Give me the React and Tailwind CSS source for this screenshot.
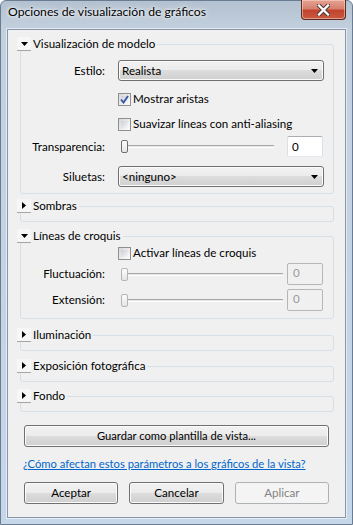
import React from "react";

function TriOpen() {
  return (
    <svg width="7" height="4" viewBox="0 0 7 4">
      <path d="M0 0H7L3.5 4Z" fill="#000" />
    </svg>
  );
}
function TriClosed() {
  return (
    <svg width="4" height="7" viewBox="0 0 4 7">
      <path d="M0 0V7L4 3.5Z" fill="#000" />
    </svg>
  );
}

function Group({ label, open, className, children }) {
  return (
    <div className={"border border-[#d5dfe5] rounded-[3px] " + className}>
      <div className="-mt-[8px] -ml-[4px] flex h-[14px] items-center">
        <div className="w-[14px] h-[14px] bg-[#f6f6f6] border-b border-[#a5a5a5] flex items-center justify-center">
          {open ? <TriOpen /> : <TriClosed />}
        </div>
        <span className="bg-[#f0f0f0] pl-[2px] pr-[2px] leading-[14px]">{label}</span>
      </div>
      {children}
    </div>
  );
}

function Select({ text }) {
  return (
    <div className="w-[206px] h-[21px] rounded-[3px] border border-[#707070] bg-[linear-gradient(#f2f2f2_0%,#ebebeb_50%,#dddddd_50%,#cfcfcf_100%)] shadow-[inset_0_0_0_1px_#fbfbfb] flex items-center justify-between pl-[3px] pr-[5px]">
      <span className="leading-[14px]">{text}</span>
      <svg width="7" height="4" viewBox="0 0 7 4">
        <path d="M0 0H7L3.5 4Z" fill="#000" />
      </svg>
    </div>
  );
}

function Check({ checked, label }) {
  return (
    <div className="flex items-center">
      <div className="w-[13px] h-[13px] border border-[#8e8f8f] bg-[linear-gradient(135deg,#d8d8d8,#fdfdfd)] p-[2px] flex items-center justify-center">
        <div className="w-full h-full bg-[linear-gradient(135deg,#cbcfd5,#f6f6f6)] flex items-center justify-center">
          {checked && (
            <svg width="9" height="9" viewBox="0 0 9 9" className="-m-[1px]">
              <path d="M1 4.5L3.5 7.5L8 1" fill="none" stroke="#3a57a6" strokeWidth="1.9" />
            </svg>
          )}
        </div>
      </div>
      <span className="ml-[2px] leading-[14px]">{label}</span>
    </div>
  );
}

function Slider({ trackW, disabled }) {
  return (
    <div className="relative w-[169px] h-[13px] flex items-center">
      <div
        className={
          "ml-[3px] h-[3px] border-t border-[#a8a8a8] border-b border-b-white bg-[#e6e6e6] " +
          trackW
        }
      />
      <div
        className={
          "absolute left-[3px] top-0 w-[7px] h-[13px] rounded-[2px] border bg-[linear-gradient(#fdfdfd,#e4e4e4)] " +
          (disabled ? "border-[#b5b5b5]" : "border-[#707070]")
        }
      />
    </div>
  );
}

function TextBox({ value, disabled, className }) {
  return disabled ? (
    <div className={"w-[36px] border border-[#b6b6b6] rounded-[2px] bg-[#f0f0f0] text-[#9a9a9a] pl-[5px] pt-[2px] leading-[14px] " + className}>
      {value}
    </div>
  ) : (
    <div className={"w-[36px] border border-[#abadb3] border-b-[#e3e9ef] border-x-[#dbdfe6] rounded-[2px] bg-white pl-[4px] flex items-center leading-[14px] " + className}>
      {value}
    </div>
  );
}

function Button({ children, disabled, className }) {
  return disabled ? (
    <div className={"rounded-[3px] border border-[#adb2b5] bg-[#f4f4f4] text-[#838383] flex items-center justify-center " + className}>
      {children}
    </div>
  ) : (
    <div className={"rounded-[3px] border border-[#707070] bg-[linear-gradient(#f2f2f2_0%,#ebebeb_50%,#dddddd_50%,#cfcfcf_100%)] shadow-[inset_0_0_0_1px_#fbfbfb] flex items-center justify-center " + className}>
      {children}
    </div>
  );
}

function Label({ children }) {
  return <div className="w-[84px] text-right leading-[14px]">{children}</div>;
}

export default function App() {
  return (
    <div className="w-[353px] h-[525px] border border-[#6a7c91] rounded-t-[6px] bg-[linear-gradient(180deg,#b3c1d0_0px,#c3d0de_29px,#c6d7ea_100%)] flex flex-col px-[6px] pb-[6px] font-['Lato',sans-serif] text-[11.6px] text-black">
      <div className="h-[28px] flex justify-between items-start">
        <div className="pl-[1px] pt-[3px] leading-[16px] text-[12.2px] [text-shadow:0_0_6px_#ffffff,0_0_3px_#ffffff]">
          Opciones de visualización de gráficos
        </div>
        <div className="-mt-[1px] w-[45px] h-[20px] rounded-b-[4px] border border-t-0 border-[#5a2c26] bg-[linear-gradient(#e6a394_0%,#d6806e_45%,#c2432e_55%,#c95a3f_100%)] shadow-[inset_0_0_0_1px_rgba(255,220,210,0.5)] flex items-center justify-center">
          <svg width="13" height="12" viewBox="0 0 13 12">
            <path d="M2 1.5L11 10.5M11 1.5L2 10.5" stroke="#4a3030" strokeWidth="4.2" strokeLinecap="square" />
            <path d="M2 1.5L11 10.5M11 1.5L2 10.5" stroke="#ffffff" strokeWidth="2.4" strokeLinecap="square" />
          </svg>
        </div>
      </div>
      <div className="flex-1 border border-[#8796a8] bg-[#f0f0f0] shadow-[0_0_0_1px_rgba(255,255,255,0.55)] pl-[12px] pr-[11px] pt-[14px] flex flex-col">
        <Group label="Visualización de modelo" open className="pb-[6px]">
          <div className="mt-[9px] h-[21px] flex items-center">
            <Label>Estilo:</Label>
            <div className="ml-[13px]">
              <Select text="Realista" />
            </div>
          </div>
          <div className="mt-[11px] h-[13px] pl-[97px]">
            <Check checked label="Mostrar aristas" />
          </div>
          <div className="mt-[12px] h-[13px] pl-[97px]">
            <Check label="Suavizar líneas con anti-aliasing" />
          </div>
          <div className="mt-[6px] h-[21px] flex items-center">
            <Label>Transparencia:</Label>
            <div className="ml-[13px]">
              <Slider trackW="w-[153px]" />
            </div>
            <TextBox value="0" className="h-[21px]" />
          </div>
          <div className="mt-[9px] h-[21px] flex items-center">
            <Label>Siluetas:</Label>
            <div className="ml-[13px]">
              <Select text="<ninguno>" />
            </div>
          </div>
        </Group>

        <Group label="Sombras" className="mt-[12px] h-[16px]" />

        <Group label="Líneas de croquis" open className="mt-[14px] pb-[7px]">
          <div className="mt-[3px] h-[13px] pl-[97px]">
            <Check label="Activar líneas de croquis" />
          </div>
          <div className="mt-[4px] h-[22px] flex items-center">
            <Label>Fluctuación:</Label>
            <div className="ml-[13px]">
              <Slider trackW="w-[162px]" disabled />
            </div>
            <TextBox value="0" disabled className="h-[22px]" />
          </div>
          <div className="mt-[4px] h-[22px] flex items-center">
            <Label>Extensión:</Label>
            <div className="ml-[13px]">
              <Slider trackW="w-[162px]" disabled />
            </div>
            <TextBox value="0" disabled className="h-[22px]" />
          </div>
        </Group>

        <Group label="Iluminación" className="mt-[16px] h-[16px]" />
        <Group label="Exposición fotográfica" className="mt-[15px] h-[16px]" />
        <Group label="Fondo" className="mt-[14px] h-[16px]" />

        <Button className="mt-[13px] ml-[4px] w-[305px] h-[22px] text-[11.2px]">Guardar como plantilla de vista...</Button>

        <div className="mt-[9px] ml-[3px] h-[15px] leading-[15px] text-[11.2px] text-[#0066cc] underline whitespace-nowrap">
          ¿Cómo afectan estos parámetros a los gráficos de la vista?
        </div>

        <div className="mt-[11px] ml-[4px] w-[305px] grid grid-cols-3 gap-[11px]">
          <Button className="h-[22px]">Aceptar</Button>
          <Button className="h-[22px]">Cancelar</Button>
          <Button disabled className="h-[22px]">Aplicar</Button>
        </div>
      </div>
    </div>
  );
}
